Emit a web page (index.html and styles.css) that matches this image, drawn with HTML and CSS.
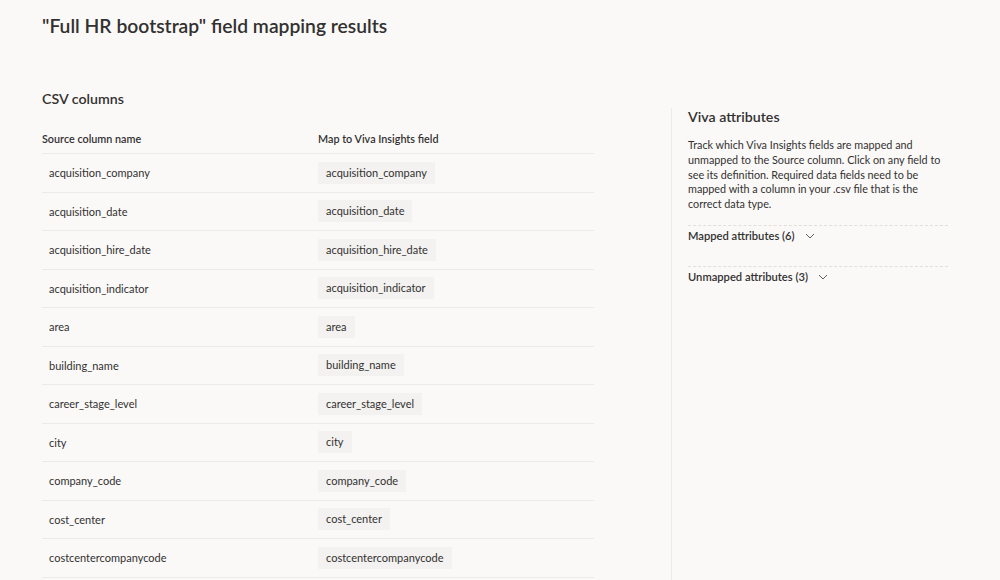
FILE: index.html
```html
<!DOCTYPE html>
<html lang="en">
<head>
<meta charset="utf-8">
<title>Field mapping results</title>
<link rel="stylesheet" href="styles.css">
</head>
<body>
<div class="page">
  <h1 class="title">"Full HR bootstrap" field mapping results</h1>
  <div class="main">
    <section class="csv">
      <h2 class="section-title">CSV columns</h2>
      <div class="table">
        <div class="row head">
          <div class="cell src">Source column name</div>
          <div class="cell map">Map to Viva Insights field</div>
        </div>
        <div class="row"><div class="cell src">acquisition_company</div><div class="cell map"><span class="chip">acquisition_company</span></div></div>
        <div class="row"><div class="cell src">acquisition_date</div><div class="cell map"><span class="chip">acquisition_date</span></div></div>
        <div class="row"><div class="cell src">acquisition_hire_date</div><div class="cell map"><span class="chip">acquisition_hire_date</span></div></div>
        <div class="row"><div class="cell src">acquisition_indicator</div><div class="cell map"><span class="chip">acquisition_indicator</span></div></div>
        <div class="row"><div class="cell src">area</div><div class="cell map"><span class="chip">area</span></div></div>
        <div class="row"><div class="cell src">building_name</div><div class="cell map"><span class="chip">building_name</span></div></div>
        <div class="row"><div class="cell src">career_stage_level</div><div class="cell map"><span class="chip">career_stage_level</span></div></div>
        <div class="row"><div class="cell src">city</div><div class="cell map"><span class="chip">city</span></div></div>
        <div class="row"><div class="cell src">company_code</div><div class="cell map"><span class="chip">company_code</span></div></div>
        <div class="row"><div class="cell src">cost_center</div><div class="cell map"><span class="chip">cost_center</span></div></div>
        <div class="row"><div class="cell src">costcentercompanycode</div><div class="cell map"><span class="chip">costcentercompanycode</span></div></div>
      </div>
    </section>
    <aside class="panel">
      <h2 class="panel-title">Viva attributes</h2>
      <p class="desc">Track which Viva Insights fields are mapped and unmapped to the Source column. Click on any field to see its definition. Required data fields need to be mapped with a column in your .csv file that is the correct data type.</p>
      <div class="group">
        <span class="group-label">Mapped attributes (6)</span>
        <svg class="chev" width="10" height="6" viewBox="0 0 10 6"><path d="M1 1 L5 5 L9 1" fill="none" stroke="#605e5c" stroke-width="1"/></svg>
      </div>
      <div class="group">
        <span class="group-label">Unmapped attributes (3)</span>
        <svg class="chev" width="10" height="6" viewBox="0 0 10 6"><path d="M1 1 L5 5 L9 1" fill="none" stroke="#605e5c" stroke-width="1"/></svg>
      </div>
    </aside>
  </div>
</div>
</body>
</html>
```

FILE: styles.css
```css
html, body {
  margin: 0;
  padding: 0;
  background: #faf9f8;
  color: #323130;
  font-family: "Lato", "Open Sans", sans-serif;
}

.page {
  padding: 0 0 0 42px;
}

.title {
  margin: 12px 0 0;
  font-size: 19.3px;
  line-height: 28px;
  font-weight: 600;
}

.main {
  display: flex;
  margin-top: 48px;
}

.csv {
  width: 552px;
  flex: none;
}

.section-title {
  margin: 0;
  font-size: 14.2px;
  line-height: 22px;
  font-weight: 600;
}

.table {
  display: flex;
  flex-direction: column;
}

.row {
  display: flex;
  align-items: center;
  height: 37.5px;
  border-bottom: 1px solid #edebe9;
  font-size: 11px;
}

.row.head {
  height: 39px;
  align-items: flex-end;
  padding-bottom: 4px;
  box-sizing: content-box;
  font-weight: 600;
  line-height: 20px;
  font-size: 10.8px;
}

.cell.src {
  width: 276px;
  flex: none;
}

.row:not(.head) .cell.src {
  padding-left: 7px;
  width: 269px;
}

.chip {
  display: inline-block;
  height: 22px;
  line-height: 22px;
  padding: 0 8px;
  background: #f3f2f1;
}

.panel {
  margin-left: 77px;
  margin-top: 20px;
  border-left: 1px solid #edebe9;
  padding-left: 16px;
  width: 262px;
  min-height: 480px;
}

.panel-title {
  margin: -1px 0 0;
  font-size: 14.2px;
  line-height: 20px;
  font-weight: 600;
}

.desc {
  margin: 11px 0 0;
  font-size: 10.8px;
  line-height: 14.75px;
}

.group {
  margin-top: 13px;
  border-top: 1px dashed #e1dfdd;
  width: 260px;
  height: 40px;
  display: flex;
  align-items: flex-start;
  gap: 10px;
}

.group + .group {
  margin-top: 0;
}

.group-label {
  font-size: 11.2px;
  font-weight: 600;
  line-height: 20px;
}

.chev {
  margin-top: 7px;
}
```
